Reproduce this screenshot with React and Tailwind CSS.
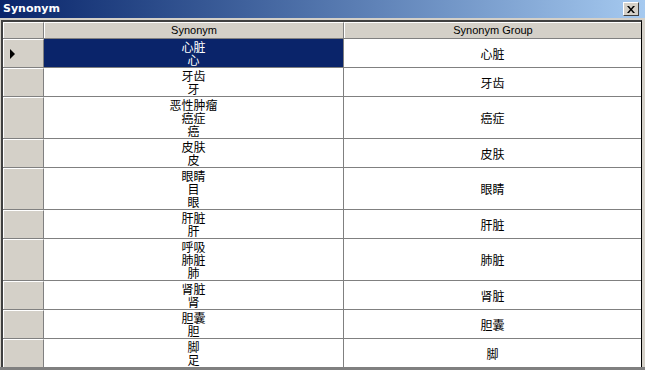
import React from "react";

const rows = [
  { syn: ["心脏", "心"], group: "心脏", selected: true },
  { syn: ["牙齿", "牙"], group: "牙齿" },
  { syn: ["恶性肿瘤", "癌症", "癌"], group: "癌症" },
  { syn: ["皮肤", "皮"], group: "皮肤" },
  { syn: ["眼睛", "目", "眼"], group: "眼睛" },
  { syn: ["肝脏", "肝"], group: "肝脏" },
  { syn: ["呼吸", "肺脏", "肺"], group: "肺脏" },
  { syn: ["肾脏", "肾"], group: "肾脏" },
  { syn: ["胆囊", "胆"], group: "胆囊" },
  { syn: ["脚", "足"], group: "脚" },
];

const cjk = { fontFamily: '"Noto Sans CJK SC", "Noto Sans", sans-serif' };
const ui = { fontFamily: '"Liberation Sans", Arial, sans-serif' };

function Row({ row }) {
  return (
    <div className="flex border-b border-[#808080]">
      <div className="w-[41px] shrink-0 bg-[#d4d0c8] border-t border-l border-white border-r border-r-[#808080] flex items-center pl-[6px]">
        {row.selected && (
          <div className="w-0 h-0 border-y-[5px] border-y-transparent border-l-[5px] border-l-black" />
        )}
      </div>
      <div
        className={
          "w-[300px] shrink-0 border-r border-[#808080] py-[1px] flex flex-col items-center text-[12px] leading-[13px] " +
          (row.selected ? "bg-[#0a246a] text-white" : "bg-white text-black")
        }
        style={cjk}
      >
        {row.syn.map((s, i) => (
          <div key={i} className="h-[13px] overflow-visible">{s}</div>
        ))}
      </div>
      <div
        className="flex-1 bg-white flex items-center justify-center text-[12px] leading-[13px] text-black"
        style={cjk}
      >
        {row.group}
      </div>
    </div>
  );
}

export default function App() {
  return (
    <div className="w-[645px] h-[370px] bg-[#d4d0c8] flex flex-col overflow-hidden">
      <div className="h-[18px] shrink-0 flex items-center justify-between bg-gradient-to-r from-[#0a246a] to-[#a6caf0] pl-[3px] pr-[6px]">
        <span className="text-white font-bold text-[11px]" style={{ fontFamily: '"DejaVu Sans", Verdana, sans-serif' }}>
          Synonym
        </span>
        <div className="w-[16px] h-[14px] bg-[#d4d0c8] border border-t-white border-l-white border-r-[#404040] border-b-[#404040] flex items-center justify-center">
          <svg width="8" height="7" viewBox="0 0 8 7">
            <path d="M0 0h2l2 2.5L6 0h2L5 3.5 8 7H6L4 4.5 2 7H0l3-3.5z" fill="black" />
          </svg>
        </div>
      </div>
      <div className="h-[2px] shrink-0" />
      <div className="ml-[1px] w-[641px] flex-1 border-l-2 border-t-2 border-[#404040] border-r border-r-black bg-white flex flex-col overflow-hidden">
        <div className="flex h-[17px] shrink-0 bg-[#d4d0c8] border-b border-[#808080] text-[11px] text-black" style={ui}>
          <div className="w-[41px] shrink-0 border-t border-l border-white border-r border-r-[#808080]" />
          <div className="w-[300px] shrink-0 border-t border-l border-white border-r border-r-[#808080] flex items-center justify-center">
            Synonym
          </div>
          <div className="flex-1 border-t border-l border-white flex items-center justify-center">
            Synonym Group
          </div>
        </div>
        {rows.map((r, i) => (
          <Row key={i} row={r} />
        ))}
      </div>
      <div className="h-[3px] shrink-0 bg-[#808080]" />
    </div>
  );
}
